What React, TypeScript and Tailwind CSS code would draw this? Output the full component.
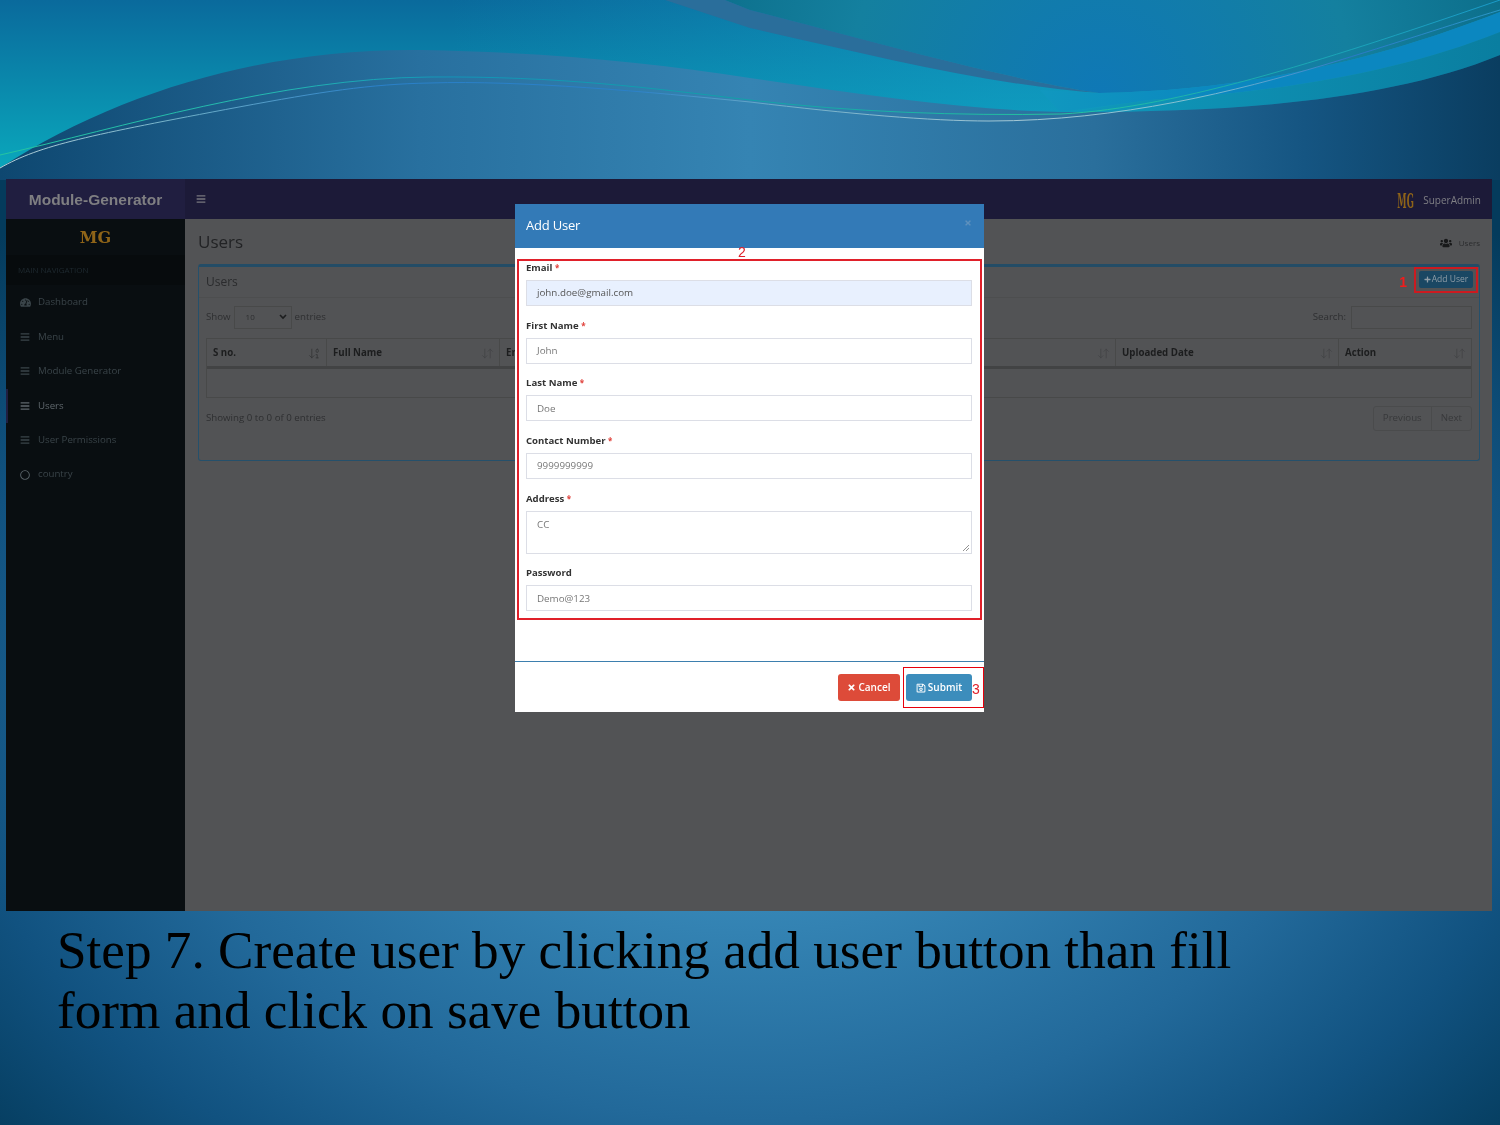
import { ArrowDownUp, ArrowDown01 } from "lucide-react";
import { FaBars, FaPlus, FaRegCircle, FaRegSave, FaTachometerAlt, FaTimes, FaUsers } from "react-icons/fa";

const nav = [
  { label: "Dashboard", icon: "dash" },
  { label: "Menu", icon: "bars" },
  { label: "Module Generator", icon: "bars" },
  { label: "Users", icon: "bars", active: true },
  { label: "User Permissions", icon: "bars" },
  { label: "country", icon: "circle" },
];

function Waves() {
  return (
    <svg className="absolute left-0 top-0" width="1500" height="180" viewBox="0 0 1500 180">
      <defs>
        <linearGradient id="base" gradientUnits="userSpaceOnUse" x1="0" y1="0" x2="0" y2="160">
          <stop offset="0" stopColor="#0a6a9c" />
          <stop offset="1" stopColor="#0aa4ba" />
        </linearGradient>
        <linearGradient id="lift" gradientUnits="userSpaceOnUse" x1="450" y1="0" x2="1000" y2="0">
          <stop offset="0" stopColor="#12a0c8" stopOpacity="0" />
          <stop offset="1" stopColor="#12a0c8" stopOpacity="0.55" />
        </linearGradient>
        <radialGradient id="above" gradientUnits="userSpaceOnUse" cx="1100" cy="93" r="420">
          <stop offset="0" stopColor="#0f78b6" />
          <stop offset="0.6" stopColor="#14809f" />
          <stop offset="1" stopColor="#0c6e8a" />
        </radialGradient>
        <linearGradient id="body" gradientUnits="userSpaceOnUse" x1="0" y1="0" x2="1500" y2="0">
          <stop offset="0" stopColor="#0e4770" />
          <stop offset="0.28" stopColor="#28709f" />
          <stop offset="0.5" stopColor="#3584b3" />
          <stop offset="0.73" stopColor="#2a6f9c" />
          <stop offset="0.87" stopColor="#155582" />
          <stop offset="1" stopColor="#0a3d60" />
        </linearGradient>
        <linearGradient id="band1" gradientUnits="userSpaceOnUse" x1="1040" y1="0" x2="1220" y2="0">
          <stop offset="0" stopColor="#1098bf" />
          <stop offset="1" stopColor="#0b87c0" />
        </linearGradient>
        <linearGradient id="band2" gradientUnits="userSpaceOnUse" x1="1075" y1="0" x2="1500" y2="0">
          <stop offset="0" stopColor="#1098bb" />
          <stop offset="1" stopColor="#0a7ea0" />
        </linearGradient>
        <linearGradient id="l1" gradientUnits="userSpaceOnUse" x1="0" y1="0" x2="1500" y2="0">
          <stop offset="0" stopColor="#24c4a0" />
          <stop offset="0.18" stopColor="#24b8b0" />
          <stop offset="0.3" stopColor="#1295b8" />
          <stop offset="0.5" stopColor="#12a0a8" />
          <stop offset="0.7" stopColor="#24c4a0" />
          <stop offset="0.85" stopColor="#1aa8b0" />
          <stop offset="1" stopColor="#1a9ac8" />
        </linearGradient>
        <linearGradient id="l2" gradientUnits="userSpaceOnUse" x1="0" y1="0" x2="1500" y2="0">
          <stop offset="0" stopColor="#b5d0d8" />
          <stop offset="0.12" stopColor="#70b0c8" />
          <stop offset="0.25" stopColor="#2a80c8" />
          <stop offset="0.42" stopColor="#2a80c8" />
          <stop offset="0.52" stopColor="#70aec8" />
          <stop offset="0.68" stopColor="#a5c8d5" />
          <stop offset="0.8" stopColor="#80c0d0" />
          <stop offset="0.9" stopColor="#2a78c8" />
          <stop offset="1" stopColor="#2a98c8" />
        </linearGradient>
      </defs>
      <rect width="1500" height="180" fill="url(#base)" />
      <rect width="1500" height="180" fill="url(#lift)" />
      <path d="M725 0 L1500 0 L1500 12 C1390 55 1260 90 1099 93 C1000 78 860 38 750 10 Z" fill="url(#above)" />
      <path d="M665 0 L725 0 L750 10 C860 38 1000 78 1099 93 C990 85 870 55 750 28 Z" fill="#2a6e9b" />
      <path d="M1040 90 L1099 93 C1260 90 1390 55 1500 12 L1500 32 C1400 72 1280 92 1150 100 L1060 112 Z" fill="url(#band1)" />
      <path d="M1075 112 C1240 112 1390 100 1500 55 L1500 32 C1400 72 1280 92 1150 100 C1120 104 1095 108 1075 112 Z" fill="url(#band2)" />
      <path d="M0 168 C120 90 270 48 421 50 C540 52 650 62 750 78 C870 96 980 112 1075 112 C1240 112 1390 100 1500 55 L1500 180 L0 180 Z" fill="url(#body)" />
      <path d="M0 155 C120 128 280 78 430 77 C560 76 650 88 750 100 C850 112 960 116 1061 114 C1180 108 1340 55 1500 0" fill="none" stroke="url(#l1)" strokeWidth="1" />
      <path d="M0 168 C40 145 90 135 239 107 C320 92 370 84 430 83 C520 80 650 92 750 102 C850 114 930 121 989 121 C1120 121 1240 90 1324 65 C1400 42 1450 25 1500 10" fill="none" stroke="url(#l2)" strokeWidth="1" />
    </svg>
  );
}

function Th({ w, label, first }: { w: string; label: string; first?: boolean }) {
  return (
    <div className={`${w} flex items-center justify-between border-r border-[#484949] pl-[6px] pr-[5px] pt-[2px] text-[9.7px] font-bold text-[#1c1d1e] last:border-r-0`}>
      <span>{label}</span>
      {first ? (
        <ArrowDown01 size={13} strokeWidth={1.5} className="text-[#343536]" />
      ) : (
        <ArrowDownUp size={13} strokeWidth={1.5} className="text-[#434446]" />
      )}
    </div>
  );
}

function Field({ label, value, req = true, bg, area, dark }: { label: string; value: string; req?: boolean; bg?: string; area?: boolean; dark?: boolean }) {
  return (
    <div className="mb-[11.7px]">
      <div className="mb-[4px] h-[16px] text-[9.6px] font-bold leading-[16px] text-[#333]">
        {label} {req && <span className="text-[8px] text-[#e0403a]">*</span>}
      </div>
      <div className={`${area ? "h-[43px] items-start pt-[6px]" : "h-[26px] items-center pt-[1px]"} ${bg ?? "bg-white"} ${dark ? "text-[#555]" : "text-[#777]"} relative flex border border-[#dcdee6] px-[10px] text-[9.8px]`}>
        {value}
        {area && (
          <svg className="absolute bottom-[1px] right-[1px]" width="8" height="8" viewBox="0 0 8 8">
            <path d="M1 7 L7 1 M4 7 L7 4" stroke="#777" strokeWidth="0.8" />
          </svg>
        )}
      </div>
    </div>
  );
}

function Modal() {
  return (
    <div className="absolute left-[509px] top-[25px] h-[508px] w-[469px] bg-white font-['Open_Sans',sans-serif]">
      <div className="flex h-[44px] items-center justify-between bg-[#337ab7] pl-[11px] pr-[12px] text-[13px] text-white">
        <span className="tracking-[-0.2px]">Add User</span>
        <FaTimes size={8} className="mb-[6px] text-[#5d90bd]" />
      </div>
      <div className="pl-[11px] pr-[12px] pt-[12px]">
        <Field label="Email" value="john.doe@gmail.com" bg="bg-[#e8f0fe]" dark />
        <Field label="First Name" value="John" />
        <Field label="Last Name" value="Doe" />
        <Field label="Contact Number" value="9999999999" />
        <Field label="Address" value="CC" area />
        <Field label="Password" value="Demo@123" req={false} />
      </div>
      <div className="absolute left-0 right-0 top-[457px]">
        <div className="h-px bg-[#3d7fae]" />
        <div className="flex h-[50px] justify-end gap-[6px] pr-[12px] pt-[12px]">
          <div className="flex h-[27px] w-[62px] items-center justify-center gap-[2px] rounded-[3px] bg-[#dd4b39] text-[10px] font-semibold text-white">
            <FaTimes size={9} /> Cancel
          </div>
          <div className="flex h-[27px] w-[66px] items-center justify-center gap-[2px] rounded-[3px] bg-[#3c8dbc] text-[10px] font-semibold text-white">
            <FaRegSave size={10} /> Submit
          </div>
        </div>
      </div>
      <div className="absolute left-[2px] top-[55px] h-[361px] w-[465px] border-2 border-[#e0202a]" />
      <div className="absolute left-[388px] top-[463px] h-[41px] w-[81px] border-[1.5px] border-red-600" />
      <span className="absolute left-[223px] top-[41px] font-['Liberation_Sans',sans-serif] text-[14px] leading-[15px] text-[#e0202a]">2</span>
      <span className="absolute left-[457px] top-[478px] font-['Liberation_Sans',sans-serif] text-[14px] leading-[15px] text-[#e0202a]">3</span>
    </div>
  );
}

function AppFrame() {
  return (
    <div className="relative ml-[6px] mr-[8px] flex h-[732px] flex-col overflow-hidden bg-[#525355] font-['Open_Sans',sans-serif] blur-[0.5px]">
      <div className="flex h-[40px] shrink-0 bg-[#1c1a38]">
        <div className="flex w-[179px] items-center justify-center bg-[#201e40] pt-[1px] font-['Liberation_Sans',sans-serif] text-[15.5px] font-bold text-[#7f7f82]">
          Module-Generator
        </div>
        <div className="flex flex-1 items-center justify-between pl-[11px] pr-[11px]">
          <FaBars size={10} className="text-[#77777d]" />
          <div className="flex items-center pt-[2px]">
            <span className="-mr-[3px] scale-x-[0.4] font-['DejaVu_Serif',serif] text-[21px] font-bold leading-none text-[#8f6418]">MG</span>
            <span className="text-[10px] text-[#7f7f84]">SuperAdmin</span>
          </div>
        </div>
      </div>
      <div className="flex flex-1">
        <div className="w-[179px] shrink-0 bg-[#090e11]">
          <div className="flex h-[36px] items-center justify-center pt-[1px] font-['DejaVu_Serif',serif] text-[16px] font-bold text-[#8f6418]">MG</div>
          <div className="flex h-[30px] items-center bg-[#070b0d] pl-[12px] text-[8px] text-[#1f2a30]">MAIN NAVIGATION</div>
          <div className="pt-[0.5px]">
            {nav.map((n) => (
              <div key={n.label} className={`flex h-[34.4px] items-center gap-[7px] border-l-2 pl-[11px] text-[9.7px] ${n.active ? "border-[#201e40] text-[#5f676c]" : "border-transparent text-[#3a4449]"}`}>
                <span className="flex w-[12px] justify-center">
                  {n.icon === "dash" && <FaTachometerAlt size={11} />}
                  {n.icon === "bars" && <FaBars size={10} />}
                  {n.icon === "circle" && <FaRegCircle size={10} className="text-[#545e62]" />}
                </span>
                {n.label}
              </div>
            ))}
          </div>
        </div>
        <div className="flex-1 pl-[13px] pr-[12px] text-[#2e2f31]">
          <div className="flex h-[45px] items-center justify-between">
            <span className="text-[17px] leading-none text-[#222325]">Users</span>
            <span className="flex items-center gap-[7px] pt-[3px] text-[8px] text-[#2b2c2e]">
              <FaUsers size={12} className="text-[#18191a]" /> Users
            </span>
          </div>
          <div className="h-[197px] rounded-[3px] border border-t-[3px] border-[#25506b] border-t-[#234c66] px-[7px]">
            <div className="-mx-[7px] flex h-[31px] items-center justify-between border-b border-[#4d4e4f] pl-[7px] pr-[1px]">
              <span className="text-[12px] text-[#2a2b2d]">Users</span>
              <div className="flex items-center gap-[7px]">
                <span className="font-['Liberation_Sans',sans-serif] text-[14px] font-bold text-[#f01c1c]">1</span>
                <div className="-mt-[5px] flex h-[26px] w-[64px] items-center justify-center border-2 border-[#cc1a20]">
                  <div className="flex h-[17px] w-[54px] items-center justify-center gap-[1px] rounded-[2px] bg-[#1a4763] text-[8.5px] text-[#8f9da7]">
                    <FaPlus size={7} /> Add User
                  </div>
                </div>
              </div>
            </div>
            <div className="flex h-[40px] items-center justify-between pb-[2px] text-[9.7px]">
              <div className="flex items-center gap-[3px]">
                Show
                <div className="flex h-[23px] w-[58px] items-center justify-between border border-[#484949] pl-[11px] pr-[4px] text-[8px]">
                  10
                  <svg width="8" height="6" viewBox="0 0 8 6"><path d="M1 1 L4 4 L7 1" fill="none" stroke="#1c1d1e" strokeWidth="1.6" /></svg>
                </div>
                entries
              </div>
              <div className="flex items-center gap-[5px]">
                Search:
                <div className="h-[23px] w-[121px] border border-[#484949]" />
              </div>
            </div>
            <div className="border border-[#484949]">
              <div className="flex h-[30px] border-b-[3px] border-[#424344]">
                <Th w="w-[120px]" label="S no." first />
                <Th w="w-[173px]" label="Full Name" />
                <Th w="w-[200px]" label="Email" />
                <Th w="w-[200px]" label="Contact" />
                <Th w="w-[216px]" label="API Key" />
                <Th w="w-[223px]" label="Uploaded Date" />
                <Th w="flex-1" label="Action" />
              </div>
              <div className="h-[28px]" />
            </div>
            <div className="flex items-start justify-between pt-[8px] text-[9.7px]">
              <span className="pt-[5px]">Showing 0 to 0 of 0 entries</span>
              <div className="flex h-[25px] items-center rounded-[3px] border border-[#4a4b4c] text-[#38393b]">
                <span className="flex h-full items-center border-r border-[#4a4b4c] px-[9px]">Previous</span>
                <span className="px-[9px]">Next</span>
              </div>
            </div>
          </div>
        </div>
      </div>
      <Modal />
    </div>
  );
}

export default function App() {
  return (
    <div className="relative h-[1125px] w-[1500px] overflow-hidden bg-[radial-gradient(ellipse_1000px_700px_at_750px_700px,#3d8cbb_0%,#3585b5_30%,#22699a_60%,#115280_80%,#043b5c_100%)]">
      <Waves />
      <div className="relative pt-[179px]">
        <AppFrame />
        <div className="pl-[57px] pt-[10px] font-['Liberation_Serif',serif] text-[53.2px] leading-[60px] text-black">
          <div>Step 7. Create user by clicking add user button than fill</div>
          <div>form and click on save button</div>
        </div>
      </div>
    </div>
  );
}
